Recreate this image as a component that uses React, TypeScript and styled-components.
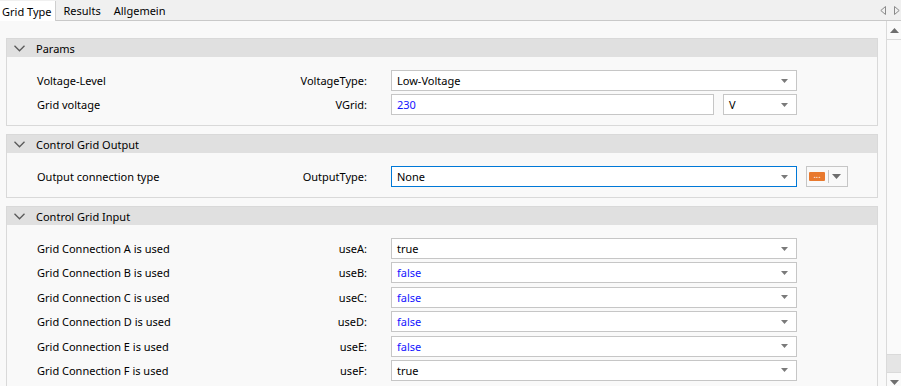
import * as React from 'react';
import styled, { createGlobalStyle } from 'styled-components';

const GlobalStyle = createGlobalStyle`
  html, body { margin: 0; padding: 0; }
  body {
    font-family: "Noto Sans", "Open Sans", sans-serif;
    font-size: 11px;
    color: #000000;
    background: #f9f9f9;
  }
`;

const Window = styled.div`
  width: 901px;
  height: 386px;
  display: flex;
  flex-direction: column;
  overflow: hidden;
  background: #f9f9f9;
`;

const TabStrip = styled.div`
  height: 21px;
  box-sizing: border-box;
  display: flex;
  align-items: flex-end;
  background: #f0f0f0;
  border-bottom: 1px solid #c9c9c9;
`;

const Tab = styled.div<{ $active?: boolean }>`
  box-sizing: border-box;
  display: flex;
  align-items: center;
  white-space: nowrap;
  height: ${(p) => (p.$active ? '20px' : '18px')};
  margin-bottom: ${(p) => (p.$active ? '-1px' : '1px')};
  padding: ${(p) => (p.$active ? '0 3px 0 2px' : '0 5px')};
  margin-right: ${(p) => (p.$active ? '3px' : '3px')};
  background: ${(p) => (p.$active ? '#ffffff' : 'transparent')};
  border-right: ${(p) => (p.$active ? '1px solid #cfcfcf' : 'none')};
`;

const TabNav = styled.div`
  margin-left: auto;
  align-self: stretch;
  display: flex;
  align-items: center;
  gap: 8px;
  padding-right: 1px;
`;

const Main = styled.div`
  flex: 1;
  display: flex;
  min-height: 0;
`;

const Content = styled.div`
  flex: 1;
  padding: 17px 8px 0 6px;
  display: flex;
  flex-direction: column;
  gap: 8px;
  overflow: hidden;
`;

const Scrollbar = styled.div`
  width: 14px;
  border-left: 1px solid #dadada;
  background: #fafafa;
  display: flex;
  flex-direction: column;
`;

const ScrollButton = styled.div<{ $down?: boolean }>`
  height: 18px;
  flex: none;
  display: flex;
  align-items: center;
  justify-content: center;
  border-bottom: ${(p) => (p.$down ? 'none' : '1px solid #dadada')};
  border-top: ${(p) => (p.$down ? '1px solid #dadada' : 'none')};
  margin-bottom: ${(p) => (p.$down ? '-5px' : '0')};
`;

const ScrollTrack = styled.div`
  flex: 1;
  display: flex;
  flex-direction: column;
  justify-content: flex-end;
`;

const ScrollThumb = styled.div`
  height: 17px;
  background: #e5e5e5;
  border-top: 1px solid #dadada;
`;

const Section = styled.section`
  border: 1px solid #d9d9d9;
  background: #f9f9f9;
`;

const SectionHeader = styled.div`
  height: 18px;
  background: #e0e0e0;
  display: flex;
  align-items: center;
  padding-left: 7px;
  gap: 11px;
`;

const SectionBody = styled.div<{ $gap: number }>`
  padding: 13px 0 10px 30px;
  display: flex;
  flex-direction: column;
  gap: ${(p) => p.$gap}px;
`;

const Row = styled.div`
  display: flex;
  align-items: center;
  height: 21px;
`;

const Desc = styled.div`
  width: 180px;
  white-space: nowrap;
`;

const Prop = styled.div`
  width: 150px;
  text-align: right;
  white-space: nowrap;
`;

const Fields = styled.div`
  margin-left: 24px;
  display: flex;
  gap: 9px;
  height: 21px;
`;

const Box = styled.div<{ $width: number; $focused?: boolean; $blue?: boolean }>`
  width: ${(p) => p.$width}px;
  height: 21px;
  box-sizing: border-box;
  background: #ffffff;
  border: 1px solid ${(p) => (p.$focused ? '#0078d7' : '#c6c6c6')};
  display: flex;
  align-items: center;
  padding: 0 8px 0 5px;
  color: ${(p) => (p.$blue ? '#1414ff' : '#000000')};
`;

const BoxText = styled.span`
  flex: 1;
  white-space: nowrap;
`;

const ColorButton = styled.div`
  width: 42px;
  height: 21px;
  box-sizing: border-box;
  border: 1px solid #c6c6c6;
  background: #f9f9f9;
  display: flex;
  align-items: center;
  padding: 0 4px 0 2px;
  gap: 3px;
`;

const Swatch = styled.div`
  width: 16px;
  height: 9px;
  background: #e8792e;
  color: #fff;
  font-size: 9px;
  line-height: 5px;
  text-align: center;
  border-radius: 1px;
`;

const Divider = styled.div`
  width: 1px;
  height: 13px;
  background: #c6c6c6;
`;

const DropArrow = () => (
  <svg width="7" height="4" viewBox="0 0 7 4">
    <path d="M0 0 H7 L3.5 4 Z" fill="#7a7a7a" />
  </svg>
);

const Chevron = () => (
  <svg width="11" height="7" viewBox="0 0 11 7">
    <polyline points="0.5,0.8 5.5,5.8 10.5,0.8" fill="none" stroke="#5a5a5a" strokeWidth="1.3" />
  </svg>
);

type Field = { value: string; width: number; blue?: boolean; focused?: boolean; select?: boolean };

type PropRow = { desc: string; prop: string; fields: Field[]; color?: boolean };

const Select = ({ f }: { f: Field }) => (
  <Box $width={f.width} $focused={f.focused} $blue={f.blue}>
    <BoxText>{f.value}</BoxText>
    {f.select !== false && <DropArrow />}
  </Box>
);

const PanelSection = ({ title, rows, gap = 3 }: { title: string; rows: PropRow[]; gap?: number }) => (
  <Section>
    <SectionHeader>
      <Chevron />
      <span>{title}</span>
    </SectionHeader>
    <SectionBody $gap={gap}>
      {rows.map((r) => (
        <Row key={r.prop}>
          <Desc>{r.desc}</Desc>
          <Prop>{r.prop}</Prop>
          <Fields>
            {r.fields.map((f, i) => (
              <Select key={i} f={f} />
            ))}
            {r.color && (
              <ColorButton>
                <Swatch>...</Swatch>
                <Divider />
                <svg width="9" height="5" viewBox="0 0 9 5">
                  <path d="M0 0 H9 L4.5 5 Z" fill="#6e6e6e" />
                </svg>
              </ColorButton>
            )}
          </Fields>
        </Row>
      ))}
    </SectionBody>
  </Section>
);

const bool = (v: boolean): Field => ({ value: v ? 'true' : 'false', width: 406, blue: !v });

const inputRows: PropRow[] = [
  { desc: 'Grid Connection A is used', prop: 'useA:', fields: [bool(true)] },
  { desc: 'Grid Connection B is used', prop: 'useB:', fields: [bool(false)] },
  { desc: 'Grid Connection C is used', prop: 'useC:', fields: [bool(false)] },
  { desc: 'Grid Connection D is used', prop: 'useD:', fields: [bool(false)] },
  { desc: 'Grid Connection E is used', prop: 'useE:', fields: [bool(false)] },
  { desc: 'Grid Connection F is used', prop: 'useF:', fields: [bool(true)] },
];

export default function App() {
  return (
    <>
      <GlobalStyle />
      <Window>
        <TabStrip>
          <Tab $active>Grid Type</Tab>
          <Tab>Results</Tab>
          <Tab>Allgemein</Tab>
          <TabNav>
            <svg width="6" height="9" viewBox="0 0 6 9">
              <path d="M5.5 0.5 V8.5 L0.8 4.5 Z" fill="none" stroke="#8a8a8a" />
            </svg>
            <svg width="6" height="9" viewBox="0 0 6 9">
              <path d="M0.5 0.5 V8.5 L5.2 4.5 Z" fill="none" stroke="#8a8a8a" />
            </svg>
          </TabNav>
        </TabStrip>
        <Main>
          <Content>
            <PanelSection
              title="Params"
              rows={[
                { desc: 'Voltage-Level', prop: 'VoltageType:', fields: [{ value: 'Low-Voltage', width: 406 }] },
                {
                  desc: 'Grid voltage',
                  prop: 'VGrid:',
                  fields: [
                    { value: '230', width: 323, blue: true, select: false },
                    { value: 'V', width: 74 },
                  ],
                },
              ]}
            />
            <PanelSection
              title="Control Grid Output"
              rows={[
                {
                  desc: 'Output connection type',
                  prop: 'OutputType:',
                  fields: [{ value: 'None', width: 406, focused: true }],
                  color: true,
                },
              ]}
            />
            <PanelSection title="Control Grid Input" rows={inputRows} gap={3.4} />
          </Content>
          <Scrollbar>
            <ScrollButton>
              <svg width="9" height="5" viewBox="0 0 9 5">
                <path d="M0 5 H9 L4.5 0 Z" fill="#6e6e6e" />
              </svg>
            </ScrollButton>
            <ScrollTrack>
              <ScrollThumb />
            </ScrollTrack>
            <ScrollButton $down>
              <svg width="9" height="5" viewBox="0 0 9 5">
                <path d="M0 0 H9 L4.5 5 Z" fill="#6e6e6e" />
              </svg>
            </ScrollButton>
          </Scrollbar>
        </Main>
      </Window>
    </>
  );
}
